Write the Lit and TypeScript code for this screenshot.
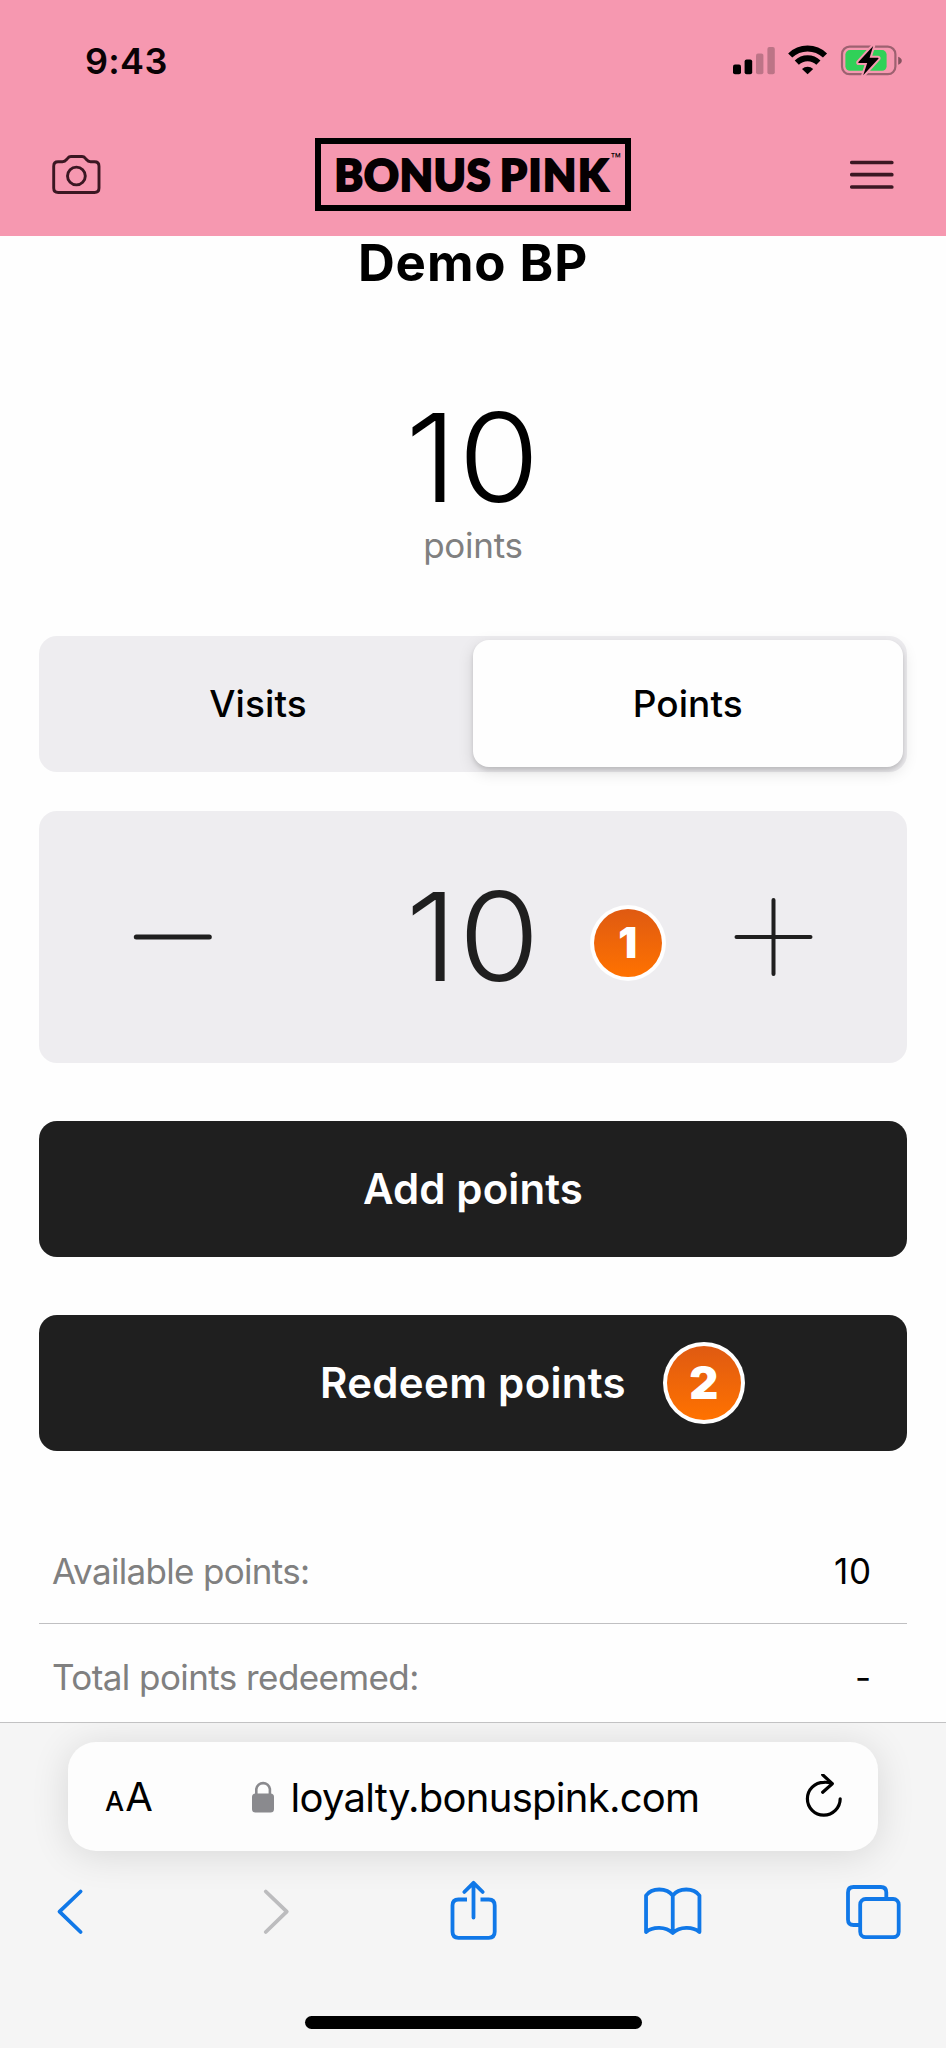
import { LitElement, html, css } from "lit";
import { customElement, property, state } from "lit/decorators.js";
import { classMap } from "lit/directives/class-map.js";

@customElement("status-bar")
class StatusBar extends LitElement {
  static styles = css`
    :host { display: flex; justify-content: space-between; align-items: center; height: 121px; padding: 0 43px 0 85px; box-sizing: border-box; }
    .time { font-size: 36px; font-weight: 600; letter-spacing: 0.3px; line-height: 44px; color: #0a0205; }
    svg { display: block; }
  `;
  render() {
    return html`
      <span class="time">9:43</span>
      <svg width="170" height="34" viewBox="733 43.5 170 34">
        <rect x="733" y="64" width="8" height="9.8" rx="2" />
        <rect x="744.6" y="59" width="7.6" height="14.8" rx="2" />
        <g opacity=".23">
          <rect x="756" y="53" width="7.4" height="20.8" rx="2" />
          <rect x="767.4" y="46.5" width="7.4" height="27.3" rx="2" />
        </g>
        <g fill="none" stroke="#000" stroke-width="5.9">
          <path d="M790.2 55A25 25 0 0 1 825 55" />
          <path d="M796.8 62.1A15.4 15.4 0 0 1 818.4 62.1" />
        </g>
        <path d="M802 68.4A8.5 8.5 0 0 1 813.2 68.4L807.6 73.8Z" />
        <rect x="842" y="46.2" width="53.4" height="27.4" rx="7.5" fill="none" stroke="#000" stroke-opacity=".36" stroke-width="2.2" />
        <path d="M898.2 56.2C903 57.6 903 62.8 898.2 64.2Z" opacity=".45" />
        <rect x="845.4" y="49.6" width="41.2" height="20.6" rx="4.500" fill="#30d158" />
        <path d="M873.2 45.4L858.4 61.6Q857.8 62.6 859 62.6H867.2L863.2 74.8L878.4 58.2Q879 57.2 877.8 57.2H869.6Z" stroke="#f698b0" stroke-width="4" stroke-linejoin="round" paint-order="stroke" />
      </svg>
    `;
  }
}

@customElement("brand-bar")
class BrandBar extends LitElement {
  static styles = css`
    :host { display: grid; grid-template-columns: 1fr auto 1fr; align-items: center; height: 107px; padding: 0 52.5px 0 51.5px; margin-bottom: 8px; box-sizing: border-box; }
    svg { display: block; }
    .menu { justify-self: end; }
    .logo { display: flex; box-sizing: border-box; width: 316px; height: 73px; border: 6.3px solid #000; padding-left: 14px; align-items: center; font: 900 43px/60px Lato, sans-serif; color: #050002; -webkit-text-stroke: 2.2px #050002; position: relative; }
    .first { letter-spacing: 0.9px; }
    .second { letter-spacing: 1.6px; margin-left: 8.5px; }
    .tm { position: absolute; right: 3.5px; top: 9px; font: 400 17px/14px Inter, sans-serif; -webkit-text-stroke: 0; }
  `;
  render() {
    return html`
      <svg width="49" height="40" viewBox="51 154.5 49 40" fill="none" stroke="#3a1722" stroke-width="2.9">
        <path d="M57 161.2H61.5Q64 161.2 65.4 159.2L66.8 157.6Q68 156 70 156H81Q83 156 84.2 157.6L85.6 159.2Q87 161.2 89.5 161.2H93.5Q98 161.2 98 165.7V187.5Q98 192 93.5 192H57.2Q52.7 192 52.7 187.5V165.7Q52.7 161.2 57 161.2Z" />
        <circle cx="75.4" cy="175.5" r="8.9" />
      </svg>
      <div class="logo"><span class="first">BONUS</span><span class="second">PINK</span><span class="tm">™</span></div>
      <svg class="menu" width="44" height="32" viewBox="849 158.5 44 32" stroke="#3a1722" stroke-width="3.7" stroke-linecap="round">
        <path d="M850.8 162H890.8M850.8 174.2H890.8M850.8 186.5H890.8" />
      </svg>
    `;
  }
}

@customElement("step-badge")
class StepBadge extends LitElement {
  @property({ type: Number }) step = 1;
  static styles = css`
    :host { display: flex; align-items: center; justify-content: center; box-sizing: border-box; border-radius: 50%; background: linear-gradient(#df5a12, #ff7200) padding-box, #fff border-box; border: 4.7px solid transparent; color: #fff; font-weight: 900; }
  `;
  render() {
    return html`${this.step}`;
  }
}

@customElement("browser-bar")
class BrowserBar extends LitElement {
  static styles = css`
    :host { display: block; box-sizing: border-box; height: 326px; border-top: 1px solid #c2c2c3; background: #f5f5f5; overflow: hidden; }
    svg { display: block; flex: none; }
    .address { display: flex; align-items: center; box-sizing: border-box; width: 810px; height: 109px; margin: 19px auto 0; padding: 0 35px 0 37px; border-radius: 28px; background: #fdfdfd; box-shadow: 0 4px 38px rgba(0, 0, 0, 0.12); color: #000; }
    .size { display: flex; align-items: baseline; width: 145.5px; line-height: 50px; padding-top: 6px; }
    .small { font-size: 27px; font-weight: 500; letter-spacing: 1px; }
    .large { font-size: 40px; }
    .url { flex: 1; font-size: 40px; letter-spacing: -0.72px; line-height: 50px; margin-left: 16px; padding-top: 2px; }
    .tools { display: flex; justify-content: space-between; padding: 19px 43px 0 40px; }
    .tools svg { fill: none; stroke: #1078e8; stroke-width: 3.8; stroke-linecap: round; stroke-linejoin: round; }
    .tools .off { stroke: #bcbcbe; }
    .home { width: 337px; height: 12.5px; border-radius: 7px; background: #000; margin: 66px auto 0; }
  `;
  render() {
    return html`
      <div class="address">
        <span class="size"><span class="small">A</span><span class="large">A</span></span>
        <svg width="24" height="34" viewBox="251 1779.5 24 34">
          <rect x="252" y="1793" width="22" height="19" rx="3.5" fill="#8a8a8e" />
          <path d="M256.3 1795V1788.5A6.9 7.1 0 0 1 269.9 1788.5V1795" fill="none" stroke="#8a8a8e" stroke-width="2.6" />
        </svg>
        <span class="url">loyalty.bonuspink.com</span>
        <svg width="38" height="46" viewBox="806 1774 38 46" fill="none" stroke="#000" stroke-width="3.2" stroke-linecap="round" stroke-linejoin="round">
          <path d="M841.2 1798.8A16.4 16.4 0 1 1 824.8 1782.3Q829 1782 832.6 1783.4" />
          <path d="M823.7 1774.8L833.3 1783.7L823.7 1792.2" />
        </svg>
      </div>
      <div class="tools">
        <svg width="60" height="80" viewBox="40 1870 60 80"><path d="M80.6 1891.5L59.5 1911.7L80.6 1932" /></svg>
        <svg class="off" width="60" height="80" viewBox="240.75 1870 60 80"><path d="M265.5 1891.5L286.5 1911.7L265.5 1932" /></svg>
        <svg width="60" height="80" viewBox="441.5 1870 60 80">
          <path stroke-linecap="butt" d="M466.5 1899.5H458Q452 1899.5 452 1905.5V1931.8Q452 1937.8 458 1937.8H488.2Q494.2 1937.8 494.2 1931.8V1905.5Q494.2 1899.5 488.2 1899.5H480" />
          <path d="M473 1917.5V1883.5M463.8 1892L473 1882.8L482.2 1892" />
        </svg>
        <svg width="60" height="80" viewBox="642.25 1870 60 80">
          <path d="M673 1895.500V1933C666 1926.300 653 1926.300 646.300 1932V1895.500C652 1887.500 667 1887.500 673 1895.500C679 1887.500 694 1887.500 699.700 1895.500V1932C693 1926.300 680 1926.300 673 1933" />
        </svg>
        <svg width="60" height="80" viewBox="843 1870 60 80">
          <rect x="860.2" y="1899" width="38.5" height="38.2" rx="5.5" />
          <path stroke-linecap="butt" d="M859.5 1925H853.5Q848 1925 848 1919.5V1892.5Q848 1887 853.5 1887H880.8Q886.3 1887 886.3 1892.5V1898" />
        </svg>
      </div>
      <div class="home"></div>
    `;
  }
}

@customElement("app-root")
class AppRoot extends LitElement {
  @state() private mode = "Points";
  static styles = css`
    :host { display: block; width: 946px; height: 2048px; overflow: hidden; background: #fefefe; font-family: Inter, "Noto Sans", sans-serif; color: #000; }
    header { background: #f698b0; height: 236px; }
    main { height: 1486px; padding: 0 39px; box-sizing: border-box; display: flex; flex-direction: column; }
    main > * { flex: none; }
    h1 { margin: 0; text-align: center; font-size: 51px; font-weight: 700; letter-spacing: 0.9px; line-height: 54px; }
    .total, .count { text-align: center; font-size: 123px; font-weight: 330; letter-spacing: 1px; line-height: 122px; transform: scaleX(1.07); }
    .total { margin-top: 107px; }
    .unit { margin-top: 3px; text-align: center; font-size: 35px; line-height: 46px; letter-spacing: -0.25px; color: #808080; }
    .tabs { display: grid; grid-template-columns: 434px 1fr; margin-top: 67.5px; height: 136px; box-sizing: border-box; padding: 4.5px 4.5px 4.5px 0; border-radius: 18px; background: #eeedf0; }
    .tab { display: flex; align-items: center; justify-content: center; font: 500 37px/46px Inter, sans-serif; color: #000; background: none; border: 0; border-radius: 16px; padding: 1px 0 0 4px; letter-spacing: 0.1px; }
    .tab.active { background: #fefefe; box-shadow: 0 5px 16px rgba(0, 0, 0, 0.13), 0 3px 4px rgba(0, 0, 0, 0.12); padding-left: 0; }
    .counter { display: grid; grid-template-columns: 268px 1fr 268px; align-items: center; justify-items: center; position: relative; margin-top: 39px; height: 252px; border-radius: 18px; background: #eeedf0; }
    .counter svg { display: block; stroke: #1f1f1f; stroke-linecap: round; }
    .count { color: #1f1f1f; }
    .one { position: absolute; left: 550.7px; top: 94.3px; width: 76px; height: 76px; font-size: 42px; }
    .two { position: absolute; left: 624px; top: 26.5px; width: 82px; height: 82px; font-size: 45px; }
    .action { position: relative; display: flex; align-items: center; justify-content: center; margin-top: 58.5px; height: 135.5px; border-radius: 18px; background: #1f1f1f; color: #fff; font-size: 42px; font-weight: 600; line-height: 50px; letter-spacing: 0.1px; }
    .action.redeem { letter-spacing: 0.3px; }
    .row { display: flex; justify-content: space-between; align-items: center; box-sizing: border-box; padding: 0 35px 0 13px; font-size: 35px; line-height: 46px; }
    .first { margin-top: 68.5px; height: 105px; border-bottom: 1.5px solid #c0c0c2; }
    .last { height: 97px; padding-top: 8.5px; }
    .label { color: #808080; letter-spacing: -0.68px; }
    .last .label { letter-spacing: -0.57px; }
    .value { letter-spacing: 0.8px; }
  `;
  render() {
    return html`
      <header><status-bar></status-bar><brand-bar></brand-bar></header>
      <main>
        <h1>Demo BP</h1>
        <div class="total">10</div>
        <div class="unit">points</div>
        <div class="tabs">
          ${["Visits", "Points"].map(
            (name) => html`<button class=${classMap({ tab: true, active: name === this.mode })} @click=${() => (this.mode = name)}>${name}</button>`
          )}
        </div>
        <div class="counter">
          <svg width="80" height="8" viewBox="0 0 80 8"><path d="M3.3 4H76.3" stroke-width="5" /></svg>
          <span class="count">10</span>
          <svg width="84" height="80" viewBox="0 0 84 80"><path d="M5.5 40H79.5M42.500 3V77" stroke-width="4" /></svg>
          <step-badge class="one" .step=${1}></step-badge>
        </div>
        <div class="action">Add points</div>
        <div class="action redeem">Redeem points<step-badge class="two" .step=${2}></step-badge></div>
        <div class="row first"><span class="label">Available points:</span><span class="value">10</span></div>
        <div class="row last"><span class="label">Total points redeemed:</span><span class="value">-</span></div>
      </main>
      <browser-bar></browser-bar>
    `;
  }
}
